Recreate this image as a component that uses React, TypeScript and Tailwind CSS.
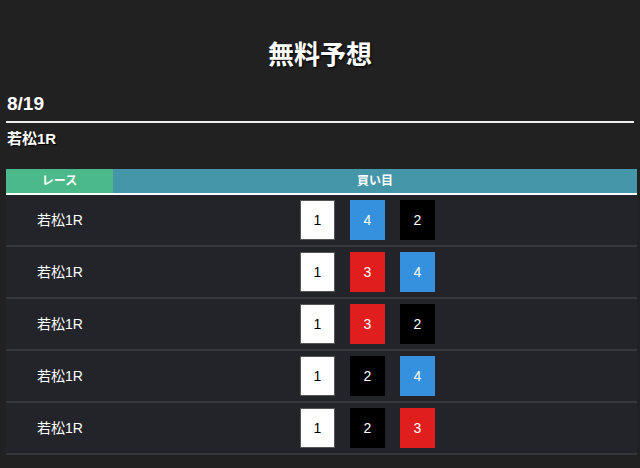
import React from 'react';

const colors: Record<number, string> = {
  1: 'bg-white text-black border border-[#555]',
  2: 'bg-black text-white',
  3: 'bg-[#e01e1e] text-white',
  4: 'bg-[#3590dd] text-white',
};

const rows = [
  { race: '若松1R', picks: [1, 4, 2] },
  { race: '若松1R', picks: [1, 3, 4] },
  { race: '若松1R', picks: [1, 3, 2] },
  { race: '若松1R', picks: [1, 2, 4] },
  { race: '若松1R', picks: [1, 2, 3] },
];

export default function App() {
  return (
    <div
      className="min-h-[468px] bg-[#212121] text-white px-[6px] pb-4"
      style={{ fontFamily: '"Liberation Sans", "Noto Sans CJK JP", sans-serif' }}
    >
      <h1 className="pt-[37px] text-center text-[26px] leading-[36px] font-bold [text-shadow:1px_1px_2px_#000]">
        無料予想
      </h1>

      <div className="mt-[17px] border-b-2 border-[#eeeeee] pb-[3px]">
        <h2 className="pl-[1px] text-[19px] leading-[28px] font-bold">8/19</h2>
      </div>
      <h3 className="mt-[4px] pl-[1px] text-[15px] leading-[24px] font-bold [text-shadow:1px_1px_1px_#000]">若松1R</h3>

      {/* 予想テーブル */}
      <div className="mt-[18px] w-[631px] bg-[#222429]">
        <div className="flex h-[26px] border-b-2 border-white text-[12px] font-bold">
          <div className="w-[107px] flex items-center justify-center bg-[#4cb98a]">レース</div>
          <div className="flex-1 flex items-center justify-center bg-[#4596a9]">買い目</div>
        </div>
        {rows.map((row, i) => (
          <div key={i} className="flex h-[52px] border-b-2 border-[#33363a]">
            <div className="w-[107px] flex items-center justify-center pl-[1px] text-[14px]">{row.race}</div>
            <div className="flex-1 flex items-center justify-center">
              {row.picks.map((n, j) => (
                <div
                  key={j}
                  className={`mr-[15px] w-[35px] h-[40px] flex items-center justify-center text-[14px] ${colors[n]}`}
                >
                  {n}
                </div>
              ))}
            </div>
          </div>
        ))}
      </div>
    </div>
  );
}
